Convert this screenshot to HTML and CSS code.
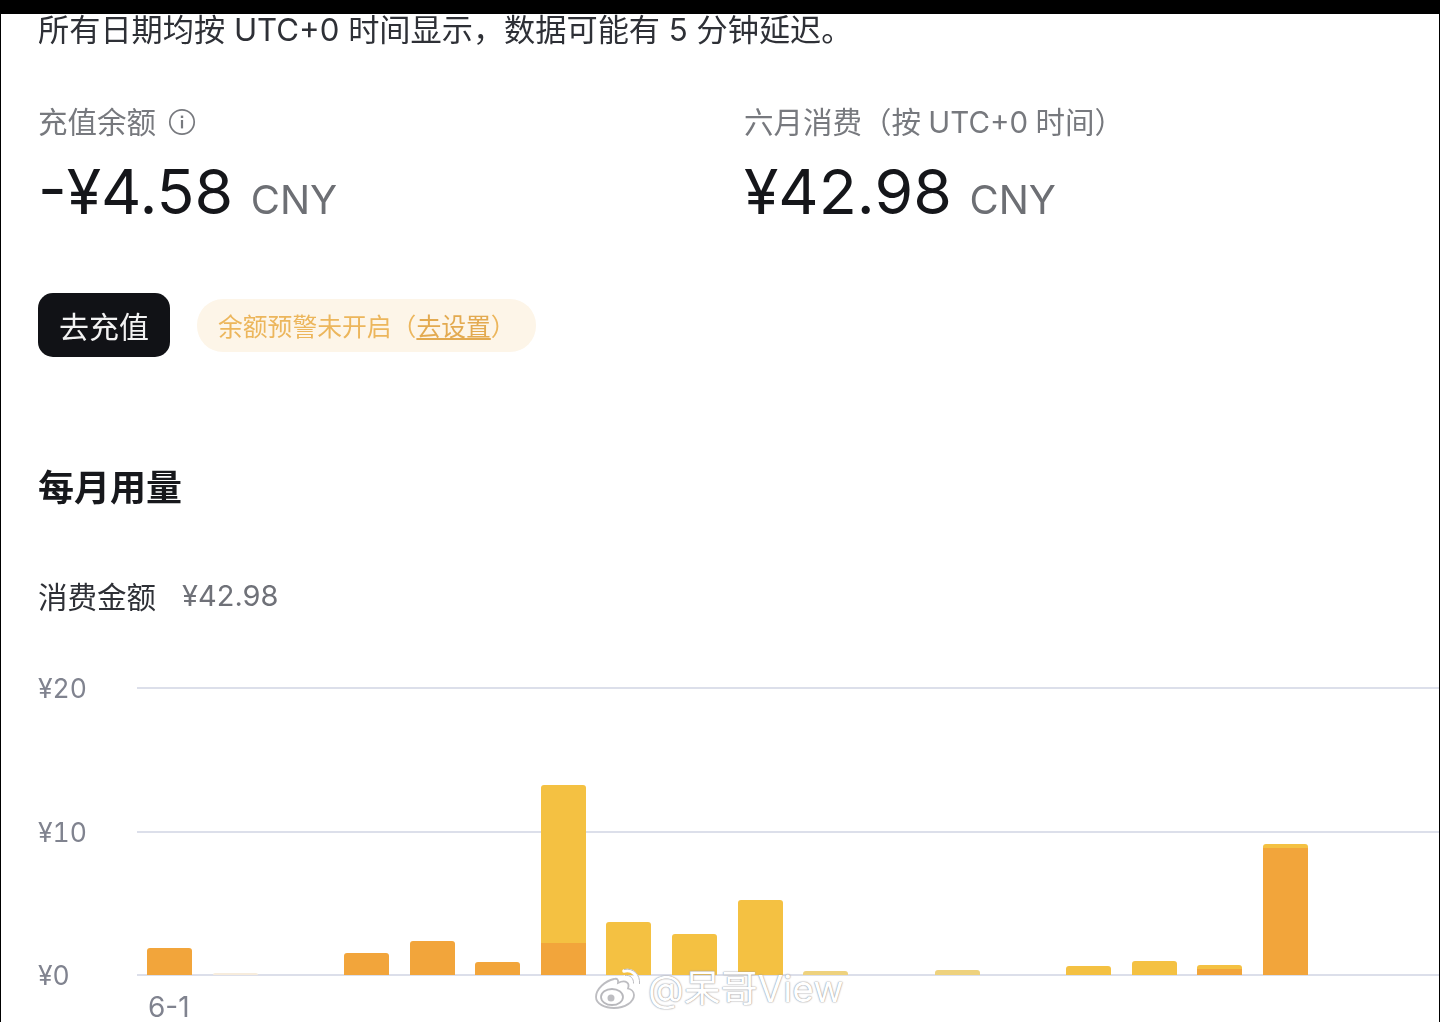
FILE: index.html
```html
<!DOCTYPE html>
<html lang="zh-CN">
<head>
    <meta charset="UTF-8">
    <meta name="viewport" content="width=device-width, initial-scale=1.0">
    <title>用量信息</title>
    <link rel="stylesheet" href="styles.css">
</head>
<body>
    <div class="topbar"></div>
    <div class="page">
        <p class="notice">所有日期均按 UTC+0 时间显示，数据可能有 5 分钟延迟。</p>

        <div class="stats">
            <div class="stat">
                <div class="stat-label">
                    充值余额
                    <svg class="info-icon" width="28" height="28" viewBox="0 0 28 28">
                        <circle cx="14" cy="14" r="12.2" fill="none" stroke="#77797e" stroke-width="1.7"/>
                        <rect x="12.9" y="12" width="2.2" height="8.4" fill="#77797e"/>
                        <rect x="12.8" y="7.6" width="2.4" height="2.4" fill="#77797e"/>
                    </svg>
                </div>
                <div class="stat-value">-¥4.58 <span class="unit">CNY</span></div>
            </div>
            <div class="stat">
                <div class="stat-label">六月消费（按 UTC+0 时间）</div>
                <div class="stat-value">¥42.98 <span class="unit">CNY</span></div>
            </div>
        </div>

        <div class="actions">
            <button class="btn-recharge" type="button">去充值</button>
            <div class="alert-pill">余额预警未开启（<a href="#">去设置</a>）</div>
        </div>

        <h2 class="section-title">每月用量</h2>

        <div class="summary">
            <span class="summary-label">消费金额</span>
            <span class="summary-value">¥42.98</span>
        </div>

        <div class="chart">
            <div class="axis-row"><span class="axis-label">¥20</span><span class="axis-line"></span></div>
            <div class="axis-row"><span class="axis-label">¥10</span><span class="axis-line"></span></div>
            <div class="axis-row"><span class="axis-label">¥0</span><span class="axis-line"></span></div>

            <div class="bars">
                <div class="day"><i class="orange" style="height:27px"></i></div>
                <div class="day"><i class="faint" style="height:2px"></i></div>
                <div class="day"></div>
                <div class="day"><i class="orange" style="height:22px"></i></div>
                <div class="day"><i class="orange" style="height:34px"></i></div>
                <div class="day"><i class="orange" style="height:13px"></i></div>
                <div class="day"><i class="yellow" style="height:158px"></i><i class="orange flat" style="height:32px"></i></div>
                <div class="day"><i class="yellow" style="height:53px"></i></div>
                <div class="day"><i class="yellow" style="height:41px"></i></div>
                <div class="day"><i class="yellow" style="height:75px"></i></div>
                <div class="day"><i class="pale" style="height:4px"></i></div>
                <div class="day"></div>
                <div class="day"><i class="pale" style="height:5px"></i></div>
                <div class="day"></div>
                <div class="day"><i class="yellow" style="height:9px"></i></div>
                <div class="day"><i class="yellow" style="height:14px"></i></div>
                <div class="day"><i class="yellow" style="height:4px"></i><i class="orange flat" style="height:6px"></i></div>
                <div class="day"><i class="yellow" style="height:4px"></i><i class="orange flat" style="height:127px"></i></div>
            </div>
        </div>

        <div class="x-label">6-1</div>
    </div>

    <div class="watermark">
        <svg class="weibo" width="48" height="42" viewBox="0 0 48 42">
            <path d="M20 12C11 14 2 22 2 30c0 7 9 11 18 11 11 0 20-6 20-13 0-4-4-6-6-6.500 1-3 .5-5-1-6-2-1.500-6-1-9 .5 .5-3-.5-5-4-4z" fill="#fff" stroke="#bdbdc1" stroke-width="1.800"/>
            <ellipse cx="18" cy="30" rx="11" ry="8" fill="#fff" stroke="#b8b8bc" stroke-width="1.800"/>
            <circle cx="17" cy="31" r="3.500" fill="#bdbdc1"/>
            <path d="M30 4c8-2 15 4 14 13M31 10c4-1 8 2 7 7" fill="none" stroke="#fff" stroke-width="3.500" stroke-linecap="round"/>
            <path d="M30 2.500c9-2 16.500 5 15.500 14.500M31 8.500c5-1 9 3 8.500 8" fill="none" stroke="#bdbdc1" stroke-width="1"/>
        </svg>
        <span class="watermark-text">@呆哥View</span>
    </div>
</body>
</html>
```

FILE: styles.css
```css
* {
    box-sizing: border-box;
}
html, body {
    margin: 0;
    padding: 0;
    height: 1022px;
    overflow: hidden;
    background-color: #fff;
}
body {
    position: relative;
    font-family: Inter, "Noto Sans CJK SC", sans-serif;
    color: #15161a;
}
.topbar {
    height: 14px;
    background-color: #000;
}
.page {
    height: 1008px;
    padding-left: 37px;
    border-left: 1px solid #000;
    border-right: 1px solid #000;
    overflow: hidden;
    filter: blur(0.4px);
}
.notice {
    margin: 0;
    font-size: 31.200px;
    line-height: 33px;
    color: #2e3036;
    white-space: nowrap;
}

/* balance row */
.stats {
    display: flex;
    margin-top: 56px;
}
.stat {
    flex: none;
    width: 706px;
}
.stat-label {
    display: flex;
    align-items: center;
    gap: 12px;
    height: 34px;
    font-size: 29.500px;
    word-spacing: -1px;
    color: #77797e;
    white-space: nowrap;
}
.info-icon {
    flex: none;
    margin-top: 3px;
}
.stat-value {
    margin-top: 16px;
    font-size: 62.500px;
    line-height: 76px;
    color: #15161a;
    white-space: nowrap;
}
.unit {
    font-size: 40px;
    color: #6d6f74;
}

/* buttons */
.actions {
    display: flex;
    align-items: center;
    gap: 27px;
    margin-top: 55px;
}
.btn-recharge {
    width: 132px;
    height: 64px;
    padding: 0;
    border: none;
    border-radius: 15px;
    background-color: #111216;
    color: #f2f2f2;
    font-family: inherit;
    font-size: 30px;
}
.alert-pill {
    display: flex;
    align-items: center;
    width: 339px;
    height: 53px;
    padding-left: 21px;
    border-radius: 26px;
    background-color: #fdf5e8;
    color: #ecb65c;
    font-size: 24.800px;
    white-space: nowrap;
}
.alert-pill a {
    color: #e3aa50;
}

.section-title {
    margin: 108px 0 0;
    font-size: 36px;
    line-height: 46px;
    font-weight: 700;
    color: #17181c;
}
.summary {
    display: flex;
    align-items: center;
    gap: 26px;
    height: 36px;
    margin-top: 66px;
}
.summary-label {
    font-size: 29.500px;
    color: #2e3036;
}
.summary-value {
    font-size: 29px;
    color: #6f7178;
}

/* chart */
.chart {
    position: relative;
    display: flex;
    flex-direction: column;
    gap: 141.500px;
    margin-top: 74px;
}
.axis-row {
    display: flex;
    align-items: center;
    height: 2px;
}
.axis-label {
    width: 99px;
    flex: none;
    font-size: 26.500px;
    font-variant-numeric: tabular-nums;
    color: #80838f;
}
.axis-line {
    flex: 1;
    height: 2px;
    background-color: #dcdfea;
}
.bars {
    position: absolute;
    left: 109px;
    bottom: 1px;
    display: flex;
    align-items: flex-end;
    gap: 20.650px;
}
.day {
    display: flex;
    flex-direction: column;
    width: 45px;
}
.day i {
    display: block;
    border-radius: 3px 3px 0 0;
}
.day i.flat {
    border-radius: 0;
}
.yellow {
    background-color: #f4c142;
}
.orange {
    background-color: #f2a53b;
}
.pale {
    background-color: #eed27e;
}
.faint {
    background-color: #f7ecdc;
}
.x-label {
    margin: 16px 0 0 110px;
    font-size: 28px;
    line-height: 30px;
    color: #80838f;
}

/* repost mark over the chart */
.watermark {
    position: absolute;
    left: 594px;
    top: 967px;
    display: flex;
    align-items: flex-start;
    gap: 6px;
}
.watermark-text {
    margin-top: -3px;
    font-size: 37px;
    line-height: 50px;
    color: #fff;
    text-shadow: 0 0 1px #8c8c90, 0 0 2px #a8a8ac;
    white-space: nowrap;
}
```
